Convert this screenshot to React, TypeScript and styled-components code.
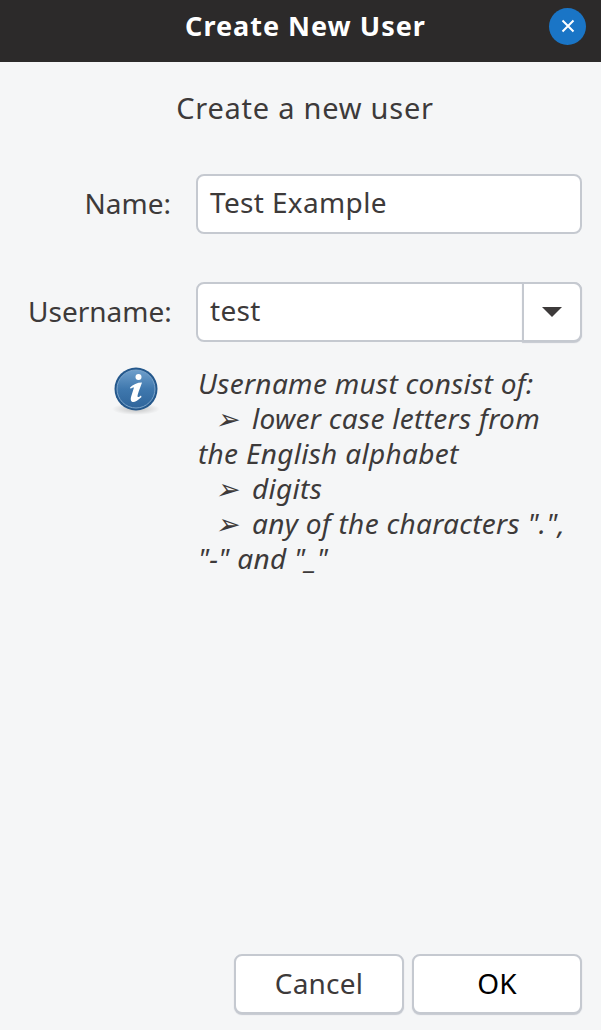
import React from 'react';
import styled, { createGlobalStyle } from 'styled-components';

const GlobalStyle = createGlobalStyle`
  html, body {
    margin: 0;
    padding: 0;
    background: #f5f6f7;
  }
  * {
    box-sizing: border-box;
  }
`;

const Dialog = styled.div`
  width: 601px;
  height: 1030px;
  display: flex;
  flex-direction: column;
  background: #f5f6f7;
  color: #3d3846;
  font-family: 'Noto Sans', 'Open Sans', sans-serif;
  font-size: 28px;
`;

const TitleBar = styled.header`
  height: 62px;
  flex: none;
  display: grid;
  grid-template-columns: 1fr auto 1fr;
  align-items: center;
  padding: 0 15px 10px 25px;
  background: #2c2a2a;
`;

const Title = styled.h1`
  grid-column: 2;
  margin: 0;
  padding-bottom: 2px;
  color: #ffffff;
  font-size: 27px;
  font-weight: 700;
  letter-spacing: 1px;
`;

const CloseButton = styled.button`
  grid-column: 3;
  justify-self: end;
  width: 37px;
  height: 37px;
  padding: 0;
  display: flex;
  align-items: center;
  justify-content: center;
  border: 0;
  border-radius: 50%;
  background: #1a75c6;
`;

const Content = styled.main`
  flex: 1;
  display: flex;
  flex-direction: column;
  padding: 26px 19px 16px 28px;
`;

const Heading = styled.h2`
  margin: 0 0 46px;
  height: 40px;
  line-height: 40px;
  text-align: center;
  font-size: 29px;
  font-weight: 400;
  letter-spacing: 0.75px;
  color: #3d3a3a;
`;

const Row = styled.div<{ $gap: number }>`
  display: grid;
  grid-template-columns: 144px 386px;
  column-gap: 24px;
  align-items: center;
  margin-bottom: ${p => p.$gap}px;
`;

const Label = styled.label`
  padding: 0 1px 3px 0;
  text-align: right;
  color: #3d3a3a;
`;

const Field = styled.div`
  height: 60px;
  display: flex;
  align-items: stretch;
  border: 2px solid #c5c9d0;
  border-radius: 8px;
  background: #ffffff;
`;

const Value = styled.span`
  flex: 1;
  padding: 0 12px;
  line-height: 52px;
  letter-spacing: 0.35px;
  color: #3d3a3a;
`;

const DropButton = styled.span`
  width: 60px;
  margin: -2px -2px -2px 0;
  display: flex;
  align-items: center;
  justify-content: center;
  border: 2px solid #c5c9d0;
  border-radius: 0 8px 8px 0;
  background: #ffffff;
  box-shadow: 0 1px 1px #c5c9d0;
`;

const Arrow = styled.span`
  width: 0;
  height: 0;
  border-left: 10px solid transparent;
  border-right: 10px solid transparent;
  border-top: 10px solid #3d3a3a;
`;

const Hint = styled.div`
  display: grid;
  grid-template-columns: 44px 1fr;
  column-gap: 40px;
  padding-left: 86px;
`;

const InfoIcon = styled.svg`
  width: 48px;
  height: 50px;
  margin-left: -2px;
`;

const Message = styled.p`
  margin: 0;
  width: 384px;
  font-style: italic;
  font-size: 28px;
  line-height: 35px;
  letter-spacing: 0.3px;
  color: #3d3a3a;
`;

const BulletMark = styled.span`
  display: inline-block;
  width: 54px;
  padding-left: 17px;
  font-size: 28px;
  line-height: 1;
`;

const Actions = styled.div`
  margin-top: auto;
  display: flex;
  justify-content: flex-end;
  gap: 8px;
`;

const Button = styled.button<{ $width: number; $strong?: boolean }>`
  width: ${p => p.$width}px;
  height: 60px;
  padding: 0 0 3px;
  border: 2px solid #c5c9d0;
  border-radius: 8px;
  background: #ffffff;
  box-shadow: 0 1px 1px #c5c9d0;
  font-family: inherit;
  font-size: 28px;
  letter-spacing: 0.2px;
  color: ${p => (p.$strong ? '#000000' : '#3d3a3a')};
`;

const App = (): JSX.Element => (
  <Dialog>
    <GlobalStyle />
    <TitleBar>
      <Title>Create New User</Title>
      <CloseButton aria-label="Close">
        <svg width="14" height="14" viewBox="0 0 14 14">
          <path d="M1.5 1.5 L12.5 12.5 M12.5 1.5 L1.5 12.5" stroke="#fff" strokeWidth="2" />
        </svg>
      </CloseButton>
    </TitleBar>
    <Content>
      <Heading>Create a new user</Heading>
      <Row $gap={48}>
        <Label>Name:</Label>
        <Field>
          <Value>Test Example</Value>
        </Field>
      </Row>
      <Row $gap={24}>
        <Label>Username:</Label>
        <Field>
          <Value>test</Value>
          <DropButton>
            <Arrow />
          </DropButton>
        </Field>
      </Row>
      <Hint>
        <InfoIcon viewBox="0 0 48 50">
          <defs>
            <linearGradient id="disc" x1="0" y1="0" x2="0" y2="1">
              <stop offset="0" stopColor="#6f9fcb" />
              <stop offset="0.5" stopColor="#3f78ae" />
              <stop offset="1" stopColor="#2f659b" />
            </linearGradient>
            <radialGradient id="shade">
              <stop offset="0" stopColor="#000" stopOpacity="0.22" />
              <stop offset="1" stopColor="#000" stopOpacity="0" />
            </radialGradient>
          </defs>
          <ellipse cx="24" cy="43" rx="24" ry="6" fill="url(#shade)" />
          <circle cx="24" cy="23" r="21.5" fill="#24588c" />
          <circle cx="24" cy="23" r="19" fill="url(#disc)" stroke="#7ea6cc" strokeWidth="1" />
          <circle cx="26.5" cy="11" r="3" fill="#fff" />
          <path
            d="M18 21.5 C21 18.5 25 16.5 30 16.5 C28.5 21 26 27 25.5 30 C25.3 31.5 26.5 31.5 29 29.5 L29.5 31 C26 34.5 22.5 36.5 20.5 36 C18.5 35.5 18.5 33 19 31 L22 21.5 C21 21.3 19.5 22 18.7 22.8 Z"
            fill="#fff"
          />
        </InfoIcon>
        <Message>
          Username must consist of:
          <br />
          <BulletMark>➢</BulletMark>lower case letters from
          <br />
          the English alphabet
          <br />
          <BulletMark>➢</BulletMark>digits
          <br />
          <BulletMark>➢</BulletMark>any of the characters ".",
          <br />
          "-" and "_"
        </Message>
      </Hint>
      <Actions>
        <Button $width={170}>Cancel</Button>
        <Button $width={170} $strong>
          OK
        </Button>
      </Actions>
    </Content>
  </Dialog>
);

export default App;
